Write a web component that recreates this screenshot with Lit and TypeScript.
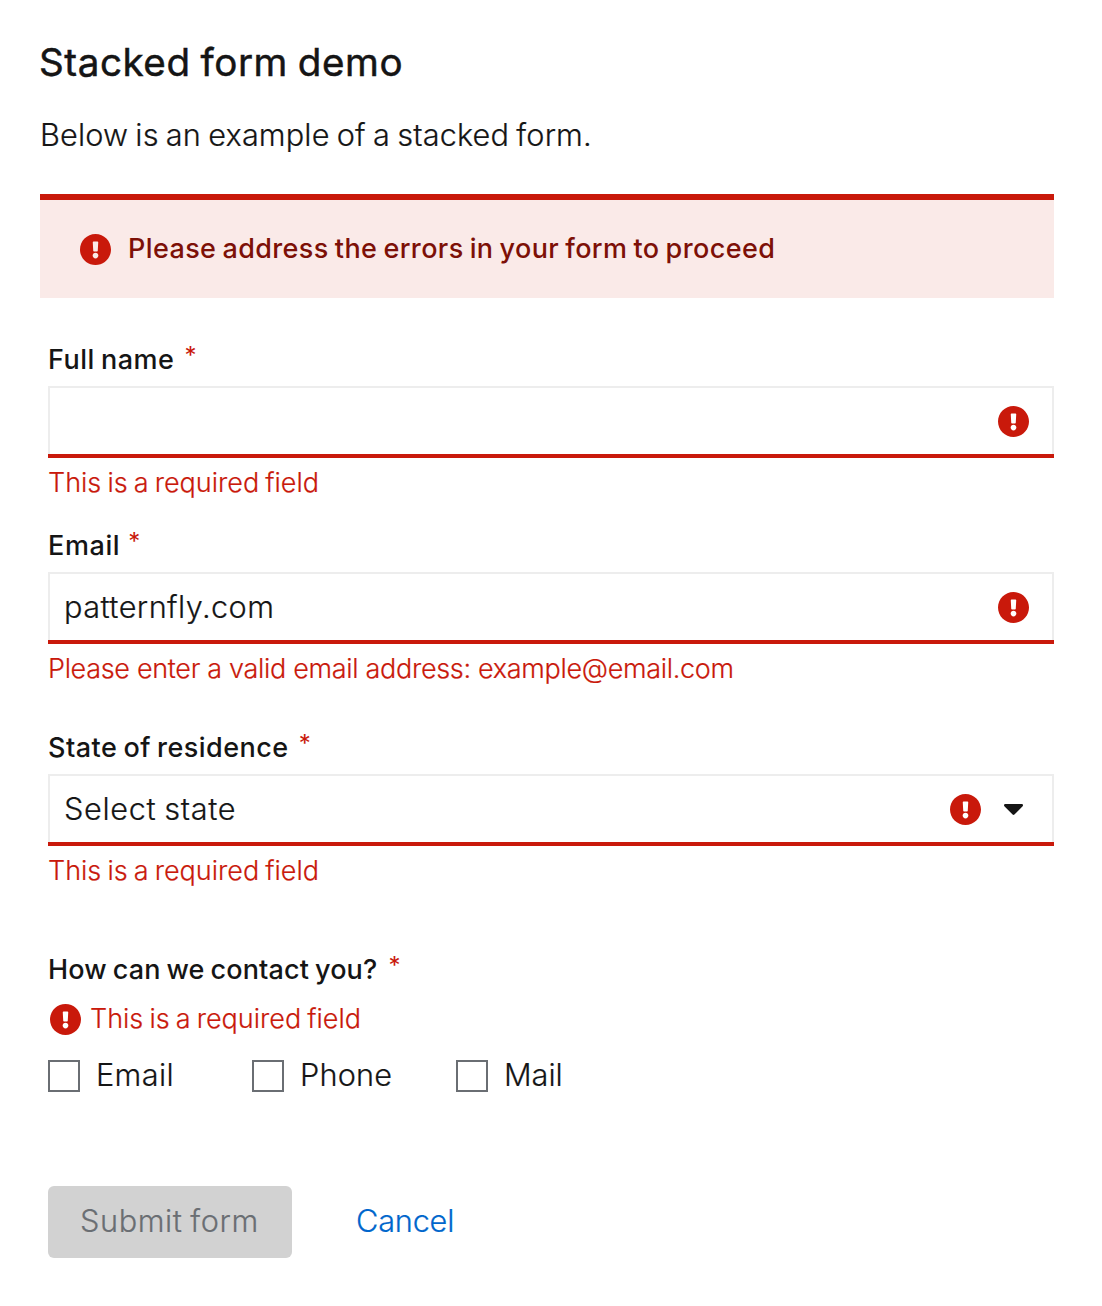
import { LitElement, html, css, svg, nothing } from "lit";
import { customElement, property } from "lit/decorators.js";
import { styleMap } from "lit/directives/style-map.js";

/** Text with its own letter and word tracking, in pixels. */
interface Copy {
  text: string;
  track: number;
  words?: number;
}

interface Field {
  label: Copy;
  starGap: number;
  value?: Copy;
  error: Copy;
  select?: boolean;
}

const REQUIRED: Copy = { text: "This is a required field", track: 0 };

const FIELDS: Field[] = [
  { label: { text: "Full name", track: 0.5 }, starGap: 10, error: REQUIRED },
  {
    label: { text: "Email", track: 0.6 },
    starGap: 8,
    value: { text: "patternfly.com", track: 0.42 },
    error: { text: "Please enter a valid email address: example@email.com", track: -0.32, words: 0 },
  },
  {
    label: { text: "State of residence", track: 0.47 },
    starGap: 10,
    value: { text: "Select state", track: 0.66 },
    error: REQUIRED,
    select: true,
  },
];

const OPTIONS: Copy[] = [
  { text: "Email", track: 0.35 },
  { text: "Phone", track: 0.15 },
  { text: "Mail", track: -0.05 },
];

const copy = (c: Copy, cls = "") =>
  html`<span
    class="copy ${cls}"
    style=${styleMap({ letterSpacing: `${c.track}px`, wordSpacing: `${c.words ?? -1.5}px` })}
    >${c.text}</span
  >`;

@customElement("error-icon")
class ErrorIcon extends LitElement {
  static styles = css`
    :host { display: block; width: 31px; height: 31px; flex: none; }
    .icon { display: block; fill: #c9190b; }
  `;
  render() {
    return svg`<svg class="icon" width="31" height="31" viewBox="8 8 496 496" aria-hidden="true">
      <path d="M504 256c0 136.997-111.043 248-248 248S8 392.997 8 256C8 119.083 119.043 8 256 8s248 111.083 248 248zm-248 50c-25.405 0-46 20.595-46 46s20.595 46 46 46 46-20.595 46-46-20.595-46-46-46zm-43.673-165.346l7.418 136c.347 6.364 5.609 11.346 11.982 11.346h48.546c6.373 0 11.635-4.982 11.982-11.346l7.418-136c.375-6.874-5.098-12.654-11.982-12.654h-63.383c-6.884 0-12.356 5.78-11.981 12.654z"/>
    </svg>`;
  }
}

@customElement("field-label")
class FieldLabel extends LitElement {
  static styles = css`
    :host { display: flex; height: 42px; line-height: 44px; font-size: 27px; font-weight: 500; white-space: nowrap; -webkit-text-stroke: 0; }
    .star { font-size: 24px; font-weight: 400; line-height: 36px; color: #c9190b; }
  `;
  @property({ attribute: false }) label!: Copy;
  @property({ type: Number }) gap = 9;
  render() {
    return html`${copy(this.label)}<span class="star" style=${styleMap({ marginLeft: `${this.gap}px` })}>*</span>`;
  }
}

@customElement("form-field")
class FormField extends LitElement {
  static styles = css`
    :host { display: block; }
    .control {
      box-sizing: border-box;
      display: flex;
      align-items: center;
      height: 68px;
      margin-top: 6px;
      padding: 0 23px 0 14px;
      border: 2px solid #ededed;
      border-bottom: 0;
      font-size: 30.7px;
    }
    .bar { height: 4px; background: #c9190b; }
    .value { flex: 1; line-height: 48px; }
    .icons { display: flex; align-items: center; gap: 23px; margin-left: auto; padding-top: 1px; }
    .select { padding-right: 29px; }
    .caret { display: block; fill: #151515; margin-top: -1px; }
    .error { height: 42px; margin-top: 3px; line-height: 44px; font-size: 27px; color: #c9190b; white-space: nowrap; }
  `;
  @property({ attribute: false }) field!: Field;
  render() {
    const f = this.field;
    return html`
      <field-label .label=${f.label} .gap=${f.starGap}></field-label>
      <div class="control ${f.select ? "select" : ""}">
        ${f.value ? copy(f.value, "value") : nothing}
        <div class="icons">
          <error-icon></error-icon>
          ${f.select
            ? html`<svg class="caret" width="19" height="11" viewBox="11.3 192 297 169" preserveAspectRatio="none">
                <path d="M31.3 192h257.3c17.8 0 26.7 21.5 14.1 34.1L174.1 354.7c-7.8 7.8-20.5 7.8-28.3 0L17.2 226.1C4.6 213.5 13.5 192 31.3 192z"/>
              </svg>`
            : nothing}
        </div>
      </div>
      <div class="bar"></div>
      <div class="error">${copy(f.error)}</div>
    `;
  }
}

@customElement("app-root")
class AppRoot extends LitElement {
  static styles = css`
    :host {
      display: block;
      box-sizing: border-box;
      height: 1306px;
      padding: 36px 48px 0 40px;
      background: #fff;
      color: #151515;
      font-family: Inter, "Liberation Sans", sans-serif;
      font-weight: 300;
      font-size: 30.7px;
      -webkit-text-stroke: 0.2px;
    }
    .title { margin: 0 0 0 -1px; font-size: 38.6px; font-weight: 400; line-height: 52px; -webkit-text-stroke: 0.5px; }
    .intro { margin: 23px 0 0; line-height: 48px; }
    .alert {
      box-sizing: border-box;
      display: flex;
      align-items: center;
      gap: 17px;
      width: 1014px;
      height: 104px;
      margin-top: 35px;
      padding: 0 40px 1px;
      border-top: 6px solid #c9190b;
      background: #faeae8;
      color: #7d1007;
      font-size: 27px;
      font-weight: 500;
      line-height: 42px;
      -webkit-text-stroke: 0;
    }
    .alert error-icon { margin-top: 2px; }
    .form { width: 1006px; padding: 40px 0 0 8px; }
    .form form-field + form-field { margin-top: 21px; }
    .form form-field.wide { margin-top: 37px; }
    .contact { margin-top: 57px; }
    .message { display: flex; align-items: center; gap: 9px; height: 42px; margin: 7px 0 0 2px; padding-top: 3px; box-sizing: border-box; line-height: 42px; font-size: 27px; color: #c9190b; }
    .message .copy { margin-top: -2px; }
    .options { display: flex; margin-top: 12px; }
    .option { display: flex; align-items: center; width: 204px; height: 48px; gap: 16px; }
    .box { box-sizing: border-box; width: 32px; height: 32px; border: 2px solid #6a6e73; margin-top: 1px; }
    .option .copy { line-height: 48px; }
    .actions { display: flex; gap: 32px; margin-top: 87px; }
    .button { box-sizing: border-box; height: 72px; padding: 0 32px 2px; border: 0; border-radius: 6px; font: inherit; line-height: 68px; white-space: nowrap; text-align: left; }
    .submit { width: 244px; background: #d2d2d2; color: #6a6e73; }
    .cancel { background: none; color: #06c; }
  `;
  render() {
    return html`
      <h1 class="title">${copy({ text: "Stacked form demo", track: 0.56 })}</h1>
      <p class="intro">${copy({ text: "Below is an example of a stacked form.", track: 0.12 })}</p>
      <div class="alert" role="alert">
        <error-icon></error-icon>
        ${copy({ text: "Please address the errors in your form to proceed", track: 0.39 })}
      </div>
      <div class="form">
        ${FIELDS.map((f) => html`<form-field class=${f.select ? "wide" : ""} .field=${f}></form-field>`)}
        <div class="contact">
          <field-label .label=${{ text: "How can we contact you?", track: 0.16 }} .gap=${11}></field-label>
          <div class="message"><error-icon></error-icon>${copy(REQUIRED)}</div>
          <div class="options">
            ${OPTIONS.map((o) => html`<label class="option"><span class="box"></span>${copy(o)}</label>`)}
          </div>
        </div>
        <div class="actions">
          <button class="button submit" disabled>${copy({ text: "Submit form", track: 0.6 })}</button>
          <button class="button cancel">${copy({ text: "Cancel", track: -0.2 })}</button>
        </div>
      </div>
    `;
  }
}
